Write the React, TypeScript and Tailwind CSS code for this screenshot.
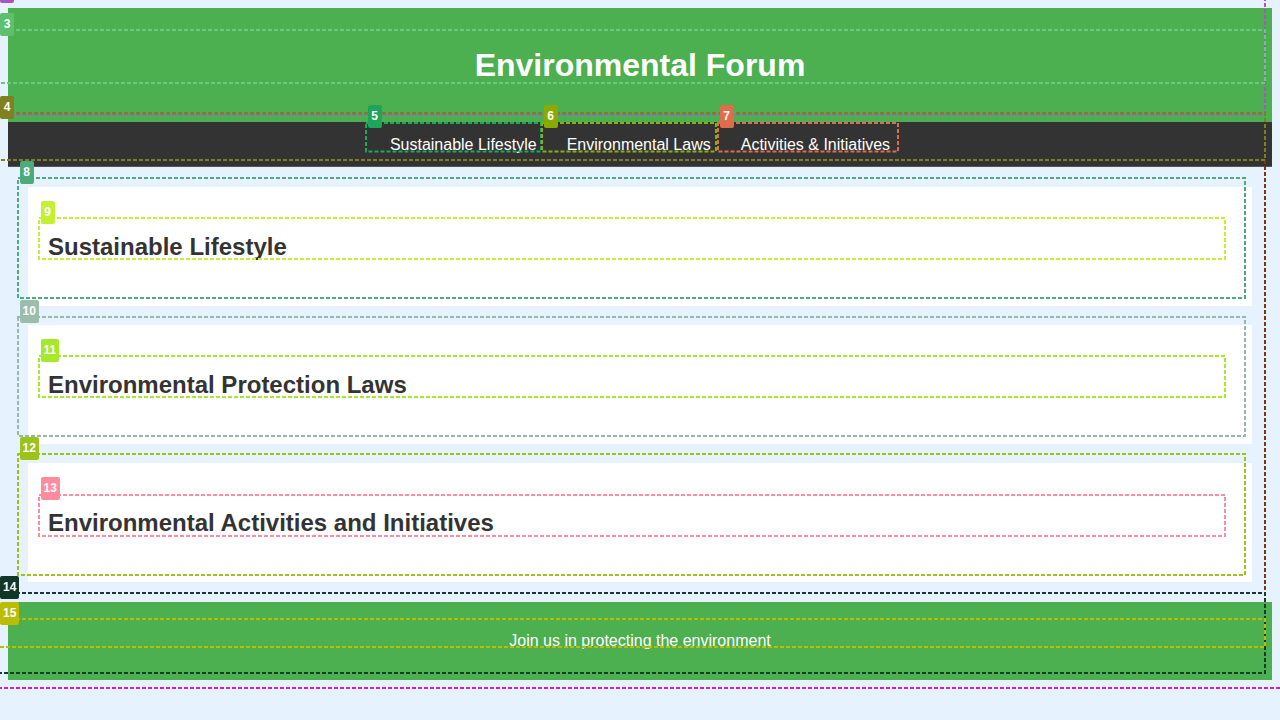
import React from "react";

type BoxSpec = {
  l: number;
  t: number;
  r: number;
  b: number;
  c: string;
  label?: string;
  lc?: string;
  sides?: string;
};

const boxes: BoxSpec[] = [
  { l: -8, t: -8, r: 1290, b: 688, c: "#cc22cc" },
  { l: -8, t: 160, r: 1265, b: 594, c: "#7a3512", sides: "r" },
  { l: -8, t: -2.5, r: 1265, b: 114, c: "#a855c8", label: "", lc: "#a855c0" },
  { l: -8, t: 30, r: 1265, b: 83, c: "#6cc87e", label: "3", lc: "#5cc06e" },
  { l: -8, t: 113, r: 1265, b: 160, c: "#7f7f1f", label: "4", lc: "#808020" },
  { l: 366, t: 122.5, r: 541, b: 151, c: "#1ea85a", label: "5", lc: "#1fa55a" },
  { l: 542, t: 122.5, r: 716, b: 151, c: "#8cae0a", label: "6", lc: "#8aaa00" },
  { l: 718, t: 122.5, r: 898, b: 151, c: "#e06c4c", label: "7", lc: "#e06c4c" },
  { l: 18, t: 178, r: 1245, b: 298, c: "#4eaa7c", label: "8", lc: "#4eaa7c" },
  { l: 39, t: 218, r: 1225, b: 259, c: "#c4f034", label: "9", lc: "#c4f034" },
  { l: 18, t: 317, r: 1245, b: 436, c: "#96b9aa", label: "10", lc: "#9cbcac" },
  { l: 39, t: 356, r: 1225, b: 397, c: "#a6e82a", label: "11", lc: "#a6e82a" },
  { l: 18, t: 454, r: 1245, b: 575, c: "#9cc21c", label: "12", lc: "#9cc21c" },
  { l: 39, t: 494.5, r: 1225, b: 535.5, c: "#ff8c9e", label: "13", lc: "#ff8c9e" },
  { l: -8, t: 593, r: 1265, b: 673, c: "#163a2c", label: "14", lc: "#123628" },
  { l: -8, t: 619, r: 1265, b: 647, c: "#bcbc00", label: "15", lc: "#bcbc00" },
];

function Box({ l, t, r, b, c, label, lc, sides }: BoxSpec) {
  const w = r - l;
  const h = b - t;
  return (
    <>
      <svg
        className="pointer-events-none absolute overflow-visible"
        style={{ left: l, top: t, width: w, height: h }}
      >
        {sides ? (
          <>
            {sides.includes("r") && (
              <line x1={w} y1={0} x2={w} y2={h} stroke={c} strokeWidth={2} strokeDasharray="4 2" />
            )}
            {sides.includes("b") && (
              <line x1={0} y1={h} x2={w} y2={h} stroke={c} strokeWidth={2} strokeDasharray="4 2" />
            )}
          </>
        ) : (
          <rect
            x={0}
            y={0}
            width={w}
            height={h}
            fill="none"
            stroke={c}
            strokeWidth={2}
            strokeDasharray="4 2"
          />
        )}
      </svg>
      {label !== undefined && (
        <div
          className="pointer-events-none absolute h-[23px] min-w-[14px] rounded-[2px] px-[3px] text-center text-[12px] font-bold leading-[22px] text-white"
          style={{ left: Math.max(0, l + 1.5), top: t - 17.5, background: lc }}
        >
          {label}
        </div>
      )}
    </>
  );
}

const sections = [
  "Sustainable Lifestyle",
  "Environmental Protection Laws",
  "Environmental Activities and Initiatives",
];

const links = ["Sustainable Lifestyle", "Environmental Laws", "Activities & Initiatives"];

export default function App() {
  return (
    <div className="relative min-h-screen overflow-hidden bg-[#e6f2fe] p-2 font-['Liberation_Sans',Arial,sans-serif]">
      <header className="flex h-[114px] items-center justify-center bg-[#4caf50]">
        <h1 className="text-[32px] font-bold text-white">Environmental Forum</h1>
      </header>
      <nav className="flex h-[45px] items-center justify-center border-b border-[#555] bg-[#333] pt-[2px]">
        {links.map((l) => (
          <a key={l} className="px-[15px] py-[5px] text-[16px] text-white">
            {l}
          </a>
        ))}
      </nav>
      <main className="flex flex-col gap-[19px] p-5">
        {sections.map((s) => (
          <section key={s} className="flex h-[119px] items-center bg-white px-5">
            <h2 className="text-[24px] font-bold text-[#333]">{s}</h2>
          </section>
        ))}
      </main>
      <footer className="flex h-[78px] items-center justify-center bg-[#4caf50] text-[16px] text-white">
        <p>Join us in protecting the environment</p>
      </footer>
      <div className="pointer-events-none absolute inset-0">
        {boxes.map((b, i) => (
          <Box key={i} {...b} />
        ))}
      </div>
    </div>
  );
}
